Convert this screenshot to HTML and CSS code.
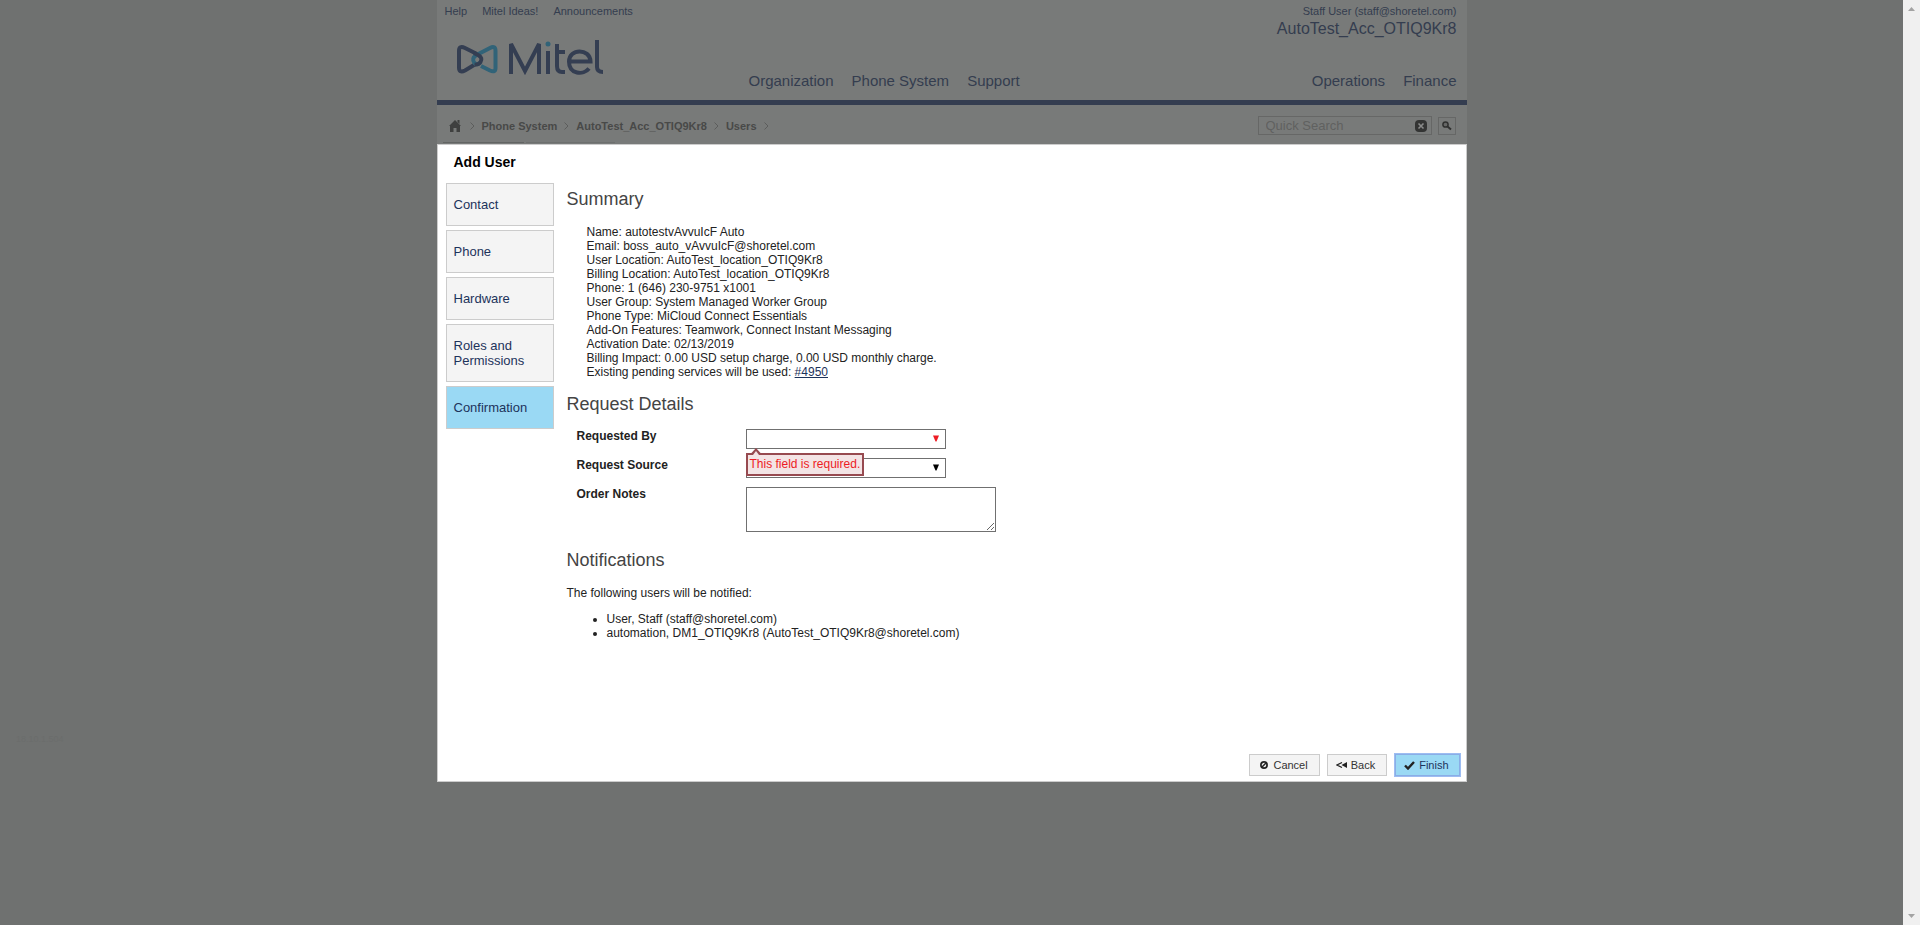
FILE: index.html
```html
<!DOCTYPE html>
<html lang="en">
<head>
<meta charset="utf-8">
<title>Add User</title>
<link rel="stylesheet" href="styles.css">
</head>
<body>
<div class="screen">
  <span class="version">18.10.1.504</span>
  <div class="page">
    <header class="header">
      <div class="header-top">
        <nav class="util"><a href="#">Help</a><a href="#">Mitel Ideas!</a><a href="#">Announcements</a></nav>
        <div class="account"><a class="who" href="#">Staff User (staff@shoretel.com)</a><a class="acct" href="#">AutoTest_Acc_OTIQ9Kr8</a></div>
      </div>
      <a class="logo" href="#" aria-label="Mitel">
        <svg width="148" height="36" viewBox="0 0 148 36" fill="none">
          <path d="M18 25 L9 30.500 Q3 33.500 3 27.500 V11 Q3 5 9 8 L22 14.500" stroke="#343e52" stroke-width="4"/>
          <path d="M25 26 L34 30.500 Q39.500 33 39.500 28 V11 Q39.500 5 34 8 L20.500 15 Q15 18.500 18.500 23 Q22 26 24.500 22" stroke="#316378" stroke-width="4"/>
          <path d="M18 13 L22.500 15.200 Q27 18 24.500 22 Q22.500 25 18.500 24.600" stroke="#343e52" stroke-width="4"/>
          <g stroke="#343e52" stroke-width="4">
            <path d="M55 34 V4 L69 31 L83 4 V34"/>
            <path d="M92 11 V34"/>
            <path d="M101 4 V26 Q101 32 106 32 H109 M101 12 H109"/>
            <path d="M113 21.500 H134.500 C134 8 113 8 113 21.500 C113 34.500 127.500 35.500 133 28.500"/>
            <path d="M141 0 V27 Q141 32 147 32"/>
          </g>
          <circle cx="92" cy="4" r="2.500" fill="#316378"/>
        </svg>
      </a>
      <nav class="mainnav">
        <div class="navgroup"><a href="#">Organization</a><a href="#">Phone System</a><a href="#">Support</a></div>
        <div class="navgroup"><a href="#">Operations</a><a href="#">Finance</a></div>
      </nav>
    </header>
    <div class="crumbbar">
      <nav class="crumbs">
        <a class="home" href="#" aria-label="Home"><svg width="12" height="12" viewBox="0 0 12 12"><path d="M6 0 L12 6 H11 V12 H7.500 V8 H4.500 V12 H1 V6 H0 Z M8.500 0 H10.500 V4 L8.500 2 Z" fill="#3f403f"/></svg></a>
        <svg width="5" height="8" viewBox="0 0 5 8"><path d="M0.500 0.500 L4 4 L0.500 7.500" fill="none" stroke="#5c5d5c"/></svg>
        <a href="#">Phone System</a>
        <svg width="5" height="8" viewBox="0 0 5 8"><path d="M0.500 0.500 L4 4 L0.500 7.500" fill="none" stroke="#5c5d5c"/></svg>
        <a href="#">AutoTest_Acc_OTIQ9Kr8</a>
        <svg width="5" height="8" viewBox="0 0 5 8"><path d="M0.500 0.500 L4 4 L0.500 7.500" fill="none" stroke="#5c5d5c"/></svg>
        <a href="#">Users</a>
        <svg width="5" height="8" viewBox="0 0 5 8"><path d="M0.500 0.500 L4 4 L0.500 7.500" fill="none" stroke="#5c5d5c"/></svg>
      </nav>
      <div class="search">
        <div class="searchbox">
          <input type="text" placeholder="Quick Search" aria-label="Quick Search">
          <button type="button" class="clear" aria-label="Clear"><svg width="12" height="12" viewBox="0 0 12 12"><rect width="12" height="12" rx="4" fill="#333433"/><path d="M3.500 3.500 L8.500 8.500 M8.500 3.500 L3.500 8.500" stroke="#8a8b8a" stroke-width="1.600"/></svg></button>
        </div>
        <button type="button" class="go" aria-label="Search"><svg width="10" height="10" viewBox="0 0 10 10"><circle cx="3.500" cy="3.500" r="2.600" fill="#666766" stroke="#303130" stroke-width="1.500"/><path d="M5.500 5.500 L9 8.500" stroke="#303130" stroke-width="2"/></svg></button>
      </div>
    </div>
    <div class="tabs"><span class="tab on"></span><span class="tab"></span></div>

    <section class="modal" role="dialog" aria-labelledby="title">
      <h1 id="title">Add User</h1>
      <div class="columns">
        <nav class="steps">
          <a href="#">Contact</a><a href="#">Phone</a><a href="#">Hardware</a><a href="#">Roles and Permissions</a><a href="#" class="current">Confirmation</a>
        </nav>
        <div class="content">
          <h2>Summary</h2>
          <div class="summary">
            <div>Name: autotestvAvvuIcF Auto</div>
            <div>Email: boss_auto_vAvvuIcF@shoretel.com</div>
            <div>User Location: AutoTest_location_OTIQ9Kr8</div>
            <div>Billing Location: AutoTest_location_OTIQ9Kr8</div>
            <div>Phone: 1 (646) 230-9751 x1001</div>
            <div>User Group: System Managed Worker Group</div>
            <div>Phone Type: MiCloud Connect Essentials</div>
            <div>Add-On Features: Teamwork, Connect Instant Messaging</div>
            <div>Activation Date: 02/13/2019</div>
            <div>Billing Impact: 0.00 USD setup charge, 0.00 USD monthly charge.</div>
            <div>Existing pending services will be used: <a href="#">#4950</a></div>
          </div>
          <h2>Request Details</h2>
          <form class="form">
            <label for="by">Requested By</label>
            <div class="field">
              <select id="by" aria-describedby="err"><option></option></select>
              <svg class="arrow invalid" width="6" height="7" viewBox="0 0 6 7"><path d="M0 0.500 H6 L3.500 6.500 H2.500 Z"/></svg>
              <div class="error" id="err">This field is required.<svg class="tip" width="10" height="7" viewBox="0 0 10 7"><path d="M0 7 V5.500 L5 0 L10 5.500 V7 Z" fill="#974a50"/><path d="M2 7 L5 3 L8 7 Z" fill="#f3e4e5"/></svg></div>
            </div>
            <label for="src">Request Source</label>
            <div class="field">
              <select id="src"><option></option></select>
              <svg class="arrow" width="6" height="7" viewBox="0 0 6 7"><path d="M0 0.500 H6 L3.500 6.500 H2.500 Z"/></svg>
            </div>
            <label for="notes">Order Notes</label>
            <textarea id="notes"></textarea>
          </form>
          <h2>Notifications</h2>
          <p>The following users will be notified:</p>
          <ul>
            <li>User, Staff (staff@shoretel.com)</li>
            <li>automation, DM1_OTIQ9Kr8 (AutoTest_OTIQ9Kr8@shoretel.com)</li>
          </ul>
        </div>
      </div>
      <footer class="actions">
        <button type="button"><svg width="8" height="8" viewBox="0 0 8 8"><circle cx="4" cy="4" r="3.100" fill="none" stroke="#222" stroke-width="1.700"/><path d="M1.800 6.200 L6.200 1.800" stroke="#222" stroke-width="1.500"/></svg>Cancel</button>
        <button type="button"><svg width="11" height="6" viewBox="0 0 11 6"><path d="M6 0.500 L1 3 L6 5.500" fill="none" stroke="#222" stroke-width="1.200"/><path d="M11 0 V6 L5.500 3 Z" fill="#222"/></svg>Back</button>
        <button type="button" class="primary"><svg width="11" height="9" viewBox="0 0 11 9"><path d="M1 4.500 L4 7.500 L10 1" fill="none" stroke="#222" stroke-width="2.400"/></svg>Finish</button>
      </footer>
    </section>
  </div>
</div>
<div class="rail" aria-hidden="true">
  <svg width="7" height="4" viewBox="0 0 7 4"><path d="M0 4 L3.500 0 L7 4 Z" fill="#a3a3a3"/></svg>
  <svg width="7" height="4" viewBox="0 0 7 4"><path d="M0 0 L3.500 4 L7 0 Z" fill="#a3a3a3"/></svg>
</div>
</body>
</html>
```
FILE: styles.css
```css
* { box-sizing: border-box; }
body {
  margin: 0;
  min-height: 100vh;
  display: flex;
  background: #6f7170;
  color: #222;
  font: 12px/14px "Liberation Sans", Arial, sans-serif;
}
a { color: inherit; text-decoration: none; }
button, input, select, textarea { font: inherit; margin: 0; border-radius: 0; }
svg { display: block; flex: none; }

.screen { flex: 1; position: relative; }
.version { position: absolute; left: 16px; bottom: 179px; font-size: 9px; color: #6b6d6c; }
.page { max-width: 1030px; margin: 0 auto; }

.rail {
  width: 17px;
  background: #f0f0f0;
  display: flex;
  flex-direction: column;
  justify-content: space-between;
  align-items: center;
  padding: 7px 0;
}

.header {
  background: #787a79;
  color: #343d4f;
  border-bottom: 5px solid #343d50;
  height: 105px;
  display: grid;
  grid-template-rows: 40px 32px 1fr;
}
.header-top {
  display: flex;
  justify-content: space-between;
  padding: 5px 10px 0 8px;
  font-size: 11px;
  line-height: 13px;
}
.util { display: flex; gap: 15px; }
.account { display: flex; flex-direction: column; text-align: right; }
.acct { font-size: 16px; line-height: 22px; }
.logo { justify-self: start; padding-left: 19px; }
.mainnav {
  display: flex;
  justify-content: space-between;
  align-self: start;
  padding: 0 10px 0 312px;
  font-size: 15px;
  line-height: 18px;
}
.navgroup { display: flex; gap: 18px; }

.crumbbar {
  background: #787a79;
  display: flex;
  justify-content: space-between;
  align-items: center;
  padding: 11px 11px 7px 12px;
}
.crumbs {
  display: flex;
  align-items: center;
  gap: 7px;
  color: #484948;
  font-weight: bold;
  font-size: 11px;
}
.home { padding-right: 2px; }
.search { display: flex; gap: 6px; align-items: center; }
.searchbox {
  display: flex;
  align-items: center;
  width: 174px;
  height: 19px;
  border: 1px solid #666766;
  padding: 0 4px 0 7px;
}
.searchbox input {
  flex: 1;
  min-width: 0;
  border: 0;
  padding: 0;
  background: none;
  font-size: 13px;
  outline: 0;
}
.searchbox input::placeholder { color: #606160; }
.clear { border: 0; padding: 0; background: none; }
.go {
  width: 18px;
  height: 18px;
  padding: 3px;
  border: 1px solid #666766;
  background: none;
}
.tabs { background: #787a79; display: flex; gap: 2px; padding-left: 6px; }
.tab { width: 89px; height: 2px; border-top: 1px solid #6d6f6e; }
.tab.on { width: 81px; border-color: #626463; }

.modal {
  background: #fff;
  border: 1px solid #ccc;
  padding: 9px 6px 5px 8px;
  min-height: 638px;
  display: flex;
  flex-direction: column;
}
h1 { margin: 0 0 13px 8px; font-size: 14px; line-height: 16px; color: #000; }
.columns { flex: 1; display: flex; gap: 13px; }
.steps { width: 108px; display: flex; flex-direction: column; gap: 4px; }
.steps a {
  border: 1px solid #ccc;
  background: #f4f4f4;
  color: #1d335b;
  padding: 13px 7px;
  font-size: 13px;
  line-height: 15px;
}
.steps .current { background: #9ad9f4; }
.content { flex: 1; padding-top: 1px; }
h2 { margin: 0; padding-top: 5px; font-size: 18px; line-height: 20px; font-weight: normal; color: #444; }
.summary { padding: 16px 0 10px 20px; }
.summary a { color: #1d335b; text-decoration: underline; }

.form {
  display: grid;
  grid-template-columns: 169px 1fr;
  row-gap: 9px;
  padding: 15px 0 13px 10px;
}
.form label { font-weight: bold; }
.field { position: relative; width: 200px; }
.form select {
  display: block;
  appearance: none;
  width: 100%;
  height: 20px;
  border: 1px solid #707070;
  background: #fff;
}
.arrow { position: absolute; right: 7px; top: 6px; fill: #000; pointer-events: none; }
.arrow.invalid { fill: #ed1c24; }
.error {
  position: absolute;
  z-index: 1;
  left: 0;
  top: 24px;
  padding: 2px 2px 3px;
  border: 2px solid #974a50;
  background: #f3e4e5;
  color: #ed1c24;
  line-height: 14px;
  white-space: nowrap;
}
.tip { position: absolute; left: 3px; top: -7px; }
textarea {
  width: 250px;
  height: 45px;
  border: 1px solid #707070;
  background: #fff;
}
.content p { margin: 0; padding: 16px 0 12px; }
.content ul { margin: 0; padding-left: 40px; }

.actions { display: flex; justify-content: flex-end; gap: 7px; }
.actions button {
  display: flex;
  align-items: center;
  gap: 5px;
  height: 22px;
  padding: 0 11px 0 10px;
  border: 1px solid #ccc;
  background: #f4f4f4;
  color: #333;
  font-size: 11px;
}
.actions button:nth-child(2) { padding-left: 8px; gap: 4px; }
.actions .primary {
  margin-left: 1px;
  padding: 0 10px 0 8px;
  gap: 4px;
  border-color: #8aaee6;
  background: #9ad9f4;
  color: #1d335b;
  box-shadow: 0 0 0 1px #9dbdf2;
}
```
